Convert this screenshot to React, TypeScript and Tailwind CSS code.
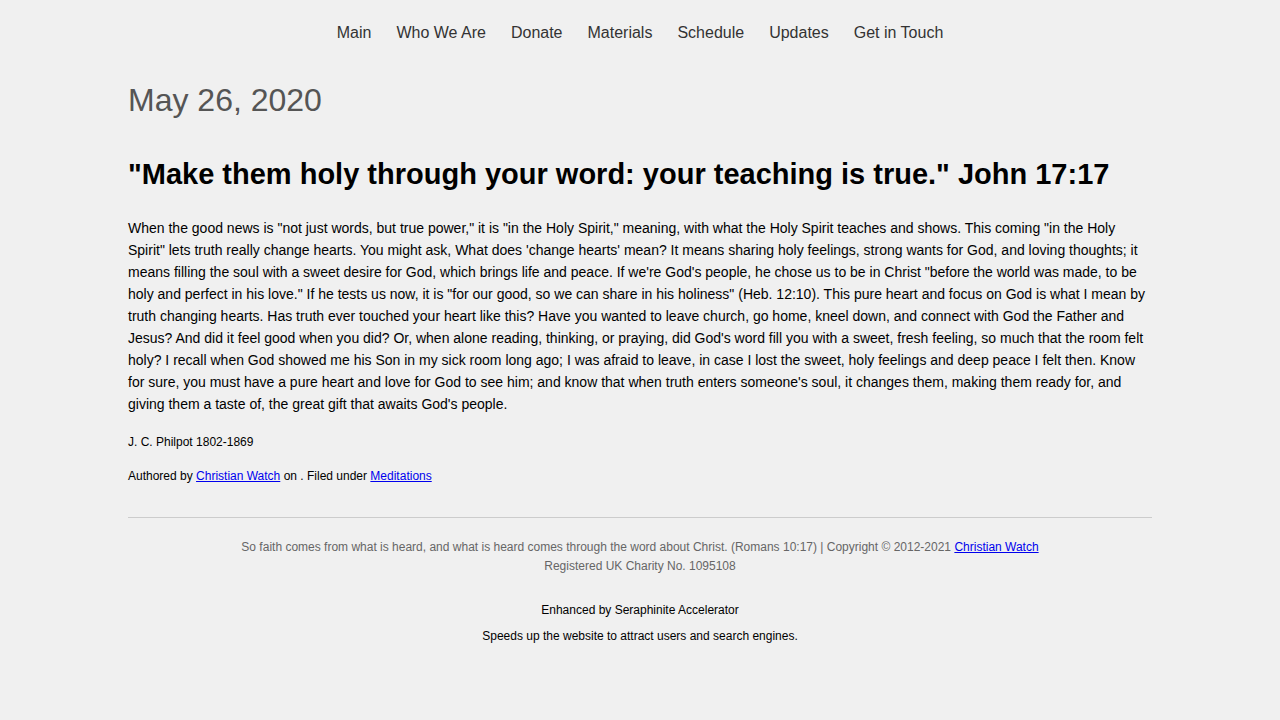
export default function App() {
  return (
    <div className="min-h-[720px] bg-[#f0f0f0] text-black" style={{ fontFamily: '"Liberation Sans", Arial, sans-serif' }}>
      <nav className="flex justify-center gap-[25px] pt-[23px] text-[16px] leading-[20px] text-[#333]">
        <a>Main</a>
        <a>Who We Are</a>
        <a>Donate</a>
        <a>Materials</a>
        <a>Schedule</a>
        <a>Updates</a>
        <a>Get in Touch</a>
      </nav>

      <main className="mx-auto w-[1024px]">
        <h1 className="mt-[38px] text-[32px] leading-[38px] text-[#555]">May 26, 2020</h1>
        <h2 className="mt-[37px] text-[29px] font-bold leading-[36px]">
          "Make them holy through your word: your teaching is true." John 17:17
        </h2>
        <p className="mt-[25px] text-[14px] leading-[22px]">
          When the good news is "not just words, but true power," it is "in the Holy Spirit," meaning, with what the Holy Spirit teaches and shows. This coming "in the Holy Spirit" lets truth really change hearts. You might ask, What does 'change hearts' mean? It means sharing holy feelings, strong wants for God, and loving thoughts; it means filling the soul with a sweet desire for God, which brings life and peace. If we're God's people, he chose us to be in Christ "before the world was made, to be holy and perfect in his love." If he tests us now, it is "for our good, so we can share in his holiness" (Heb. 12:10). This pure heart and focus on God is what I mean by truth changing hearts. Has truth ever touched your heart like this? Have you wanted to leave church, go home, kneel down, and connect with God the Father and Jesus? And did it feel good when you did? Or, when alone reading, thinking, or praying, did God's word fill you with a sweet, fresh feeling, so much that the room felt holy? I recall when God showed me his Son in my sick room long ago; I was afraid to leave, in case I lost the sweet, holy feelings and deep peace I felt then. Know for sure, you must have a pure heart and love for God to see him; and know that when truth enters someone's soul, it changes them, making them ready for, and giving them a taste of, the great gift that awaits God's people.
        </p>
        <p className="mt-[18px] text-[12px] leading-[18px]">J. C. Philpot 1802-1869</p>
        <p className="mt-[16px] text-[12px] leading-[18px]">
          Authored by <a className="text-[#0000ee] underline">Christian Watch</a> on . Filed under{" "}
          <a className="text-[#0000ee] underline">Meditations</a>
        </p>

        <footer className="mt-[32px] border-t border-[#ccc] pt-[20px] text-center">
          <p className="text-[12px] leading-[19px] text-[#666]">
            So faith comes from what is heard, and what is heard comes through the word about Christ. (Romans 10:17) | Copyright © 2012-2021{" "}
            <a className="text-[#0000ee] underline">Christian Watch</a>
            <br />
            Registered UK Charity No. 1095108
          </p>
          <p className="mt-[25px] text-[12px] leading-[18px]">Enhanced by Seraphinite Accelerator</p>
          <p className="mt-[8px] text-[12px] leading-[18px]">Speeds up the website to attract users and search engines.</p>
        </footer>
      </main>
    </div>
  );
}
